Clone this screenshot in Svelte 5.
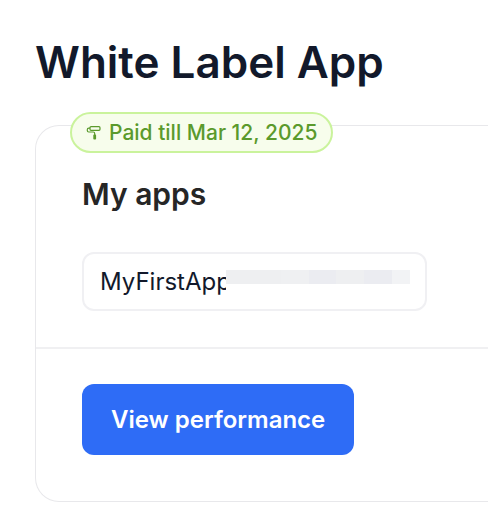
<script>
  let { appName = "MyFirstApp", paidTill = "Mar 12, 2025" } = $props();

  const tiles = ["#eeeff1", "#eeeff1", "#eff0f2", "#ebecf1", "#eeeff1", "#ebecf1", "#f2f3f5"];

  let name = $state(appName);
</script>

<main class="page">
  <h1>White Label App</h1>

  <section class="card">
    <div class="badge">
      <svg class="roller" viewBox="0 0 16 16" aria-hidden="true">
        <rect x="4" y="1.7" width="10" height="3.6" rx="1" />
        <path d="M4 3.2H2.8Q1.3 3.2 1.3 4.7V5.5Q1.3 7 2.8 7H7.2Q8.7 7 8.7 8.4V10" />
        <rect class="handle" x="7.3" y="9.6" width="2.8" height="5" rx="0.8" />
      </svg>
      <span>Paid till {paidTill}</span>
    </div>

    <div class="body">
      <h2 id="apps-title">My apps</h2>
      <div class="field">
        <input type="text" aria-labelledby="apps-title" bind:value={name} />
        <div class="mask">
          {#each tiles as color}
            <span style:background={color}></span>
          {/each}
        </div>
      </div>
    </div>

    <div class="footer">
      <button type="button">View performance</button>
    </div>
  </section>
</main>

<style>
  :global(body) {
    margin: 0;
    background: #fff;
    overflow: hidden;
  }
  .page {
    padding: 32px 0 0 35px;
    font-family: Inter, "Liberation Sans", sans-serif;
    color: #12192b;
  }
  h1 {
    margin: 0 0 33px;
    font-size: 44px;
    line-height: 60px;
    font-weight: 600;
  }
  /* The card runs on past the right edge of the window */
  .card {
    position: relative;
    border: 1px solid #e8e8eb;
    border-right: none;
    border-radius: 24px 0 0 24px;
  }
  .badge {
    position: absolute;
    top: -14px;
    left: 34px;
    display: flex;
    align-items: center;
    gap: 7px;
    box-sizing: border-box;
    height: 41px;
    padding: 0 14px;
    border: 2px solid #caf39c;
    border-radius: 21px;
    background: #f7fdec;
    color: #5b9a2c;
    font-size: 21px;
    line-height: 26px;
    font-weight: 500;
    white-space: nowrap;
  }
  .roller {
    width: 16px;
    height: 16px;
    fill: none;
    stroke: #5b9a2c;
    stroke-width: 1.2;
  }
  .roller .handle {
    fill: #5b9a2c;
    stroke: none;
  }
  .body {
    padding: 48px 46px 36px;
    border-bottom: 2px solid #f0f0f2;
  }
  h2 {
    margin: 0 0 38px;
    font-size: 30px;
    line-height: 40px;
    font-weight: 600;
    color: #262626;
  }
  .field {
    display: flex;
    align-items: center;
    box-sizing: border-box;
    max-width: 345px;
    height: 59px;
    padding: 0 15px 0 16px;
    border: 2px solid #f0f0f3;
    border-radius: 12px;
  }
  input {
    width: 126px;
    height: 55px;
    padding: 0;
    border: none;
    outline: none;
    background: none;
    font: inherit;
    font-size: 24px;
    color: #12192b;
  }
  .mask {
    display: flex;
    flex: 1;
    height: 14px;
    padding-bottom: 10px;
  }
  .mask span {
    flex: 3;
  }
  .mask span:last-child {
    flex: 2;
  }
  .footer {
    padding: 35px 46px 46px;
  }
  button {
    height: 71px;
    padding: 0 29px;
    border: none;
    border-radius: 12px;
    background: #2e6cf6;
    color: #fff;
    font: inherit;
    font-size: 24px;
    font-weight: 600;
  }
</style>
